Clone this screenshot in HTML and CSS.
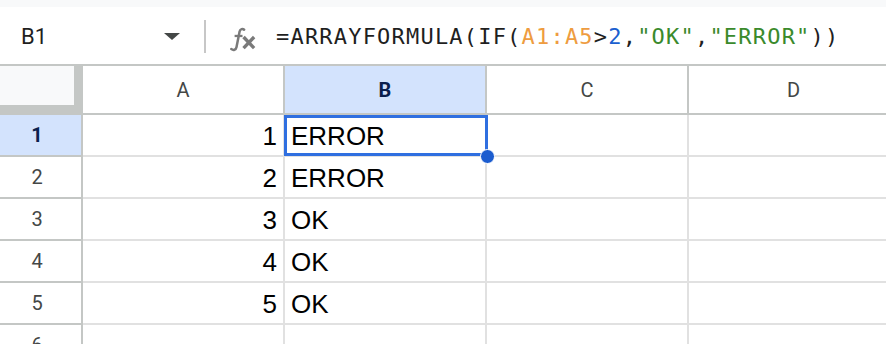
FILE: index.html
```html
<!DOCTYPE html>
<html>
<head>
	<title>Sheet</title>
	<meta charset="utf-8">
	<link rel="stylesheet" href="styles.css">
</head>
<body>
	<div class="topStrip"></div>
	<div class="formulaBar">
		<div class="nameBox">
			<span class="cellRef">B1</span>
			<span class="dropArrow"></span>
		</div>
		<div class="divider"></div>
		<svg class="fxIcon" viewBox="0 0 26 24" version="1.1" xmlns="http://www.w3.org/2000/svg">
			<path d="M14.6 2.6 C13.2 1.3 10.8 1.6 10.2 4.4 L7.2 19.4 C6.6 22.2 4.2 22.6 2.2 21.2" fill="none" stroke="#7a7a7a" stroke-width="2.4" stroke-linecap="round"/>
			<line x1="5.4" y1="8.6" x2="13" y2="8.6" stroke="#7a7a7a" stroke-width="2.2"/>
			<line x1="14" y1="9.6" x2="24.2" y2="20.4" stroke="#7a7a7a" stroke-width="3.2"/>
			<line x1="24.2" y1="9.6" x2="14" y2="20.4" stroke="#7a7a7a" stroke-width="3.2"/>
		</svg>
		<div class="formula">=ARRAYFORMULA(IF(<span class="range">A1:A5</span>&gt;<span class="num">2</span>,<span class="str">"OK"</span>,<span class="str">"ERROR"</span>))</div>
	</div>

	<div class="sheet">
		<div class="row headRow">
			<div class="corner"></div>
			<div class="colHead">A</div>
			<div class="colHead active">B</div>
			<div class="colHead">C</div>
			<div class="colHead">D</div>
		</div>
		<div class="row">
			<div class="rowHead active">1</div>
			<div class="cell num">1</div>
			<div class="cell selected">ERROR<span class="handle"></span></div>
			<div class="cell"></div>
			<div class="cell"></div>
		</div>
		<div class="row">
			<div class="rowHead">2</div>
			<div class="cell num">2</div>
			<div class="cell">ERROR</div>
			<div class="cell"></div>
			<div class="cell"></div>
		</div>
		<div class="row">
			<div class="rowHead">3</div>
			<div class="cell num">3</div>
			<div class="cell">OK</div>
			<div class="cell"></div>
			<div class="cell"></div>
		</div>
		<div class="row">
			<div class="rowHead">4</div>
			<div class="cell num">4</div>
			<div class="cell">OK</div>
			<div class="cell"></div>
			<div class="cell"></div>
		</div>
		<div class="row">
			<div class="rowHead">5</div>
			<div class="cell num">5</div>
			<div class="cell">OK</div>
			<div class="cell"></div>
			<div class="cell"></div>
		</div>
		<div class="row">
			<div class="rowHead">6</div>
			<div class="cell num"></div>
			<div class="cell"></div>
			<div class="cell"></div>
			<div class="cell"></div>
		</div>
	</div>
</body>
</html>
```

FILE: styles.css
```css
body {
	margin: 0;
	padding: 0;
	overflow: hidden;
	background: #fff;
	font-family: Roboto, "Liberation Sans", sans-serif;
}

.topStrip {
	height: 7px;
	background: #f8f9fa;
}

/* formula bar */
.formulaBar {
	display: flex;
	align-items: center;
	height: 57px;
	background: #fff;
}

.nameBox {
	display: flex;
	align-items: center;
	justify-content: space-between;
	box-sizing: border-box;
	width: 204px;
	padding: 0 24px 0 21px;
}

.cellRef {
	font-size: 22px;
	color: #1f1f1f;
	margin-top: 1px;
}

.dropArrow {
	width: 0;
	height: 0;
	border-left: 8px solid transparent;
	border-right: 8px solid transparent;
	border-top: 7px solid #444746;
	margin-top: 2px;
}

.divider {
	width: 2px;
	height: 33px;
	margin-top: 2px;
	background: #c7c7c7;
}

.fxIcon {
	width: 27px;
	height: 25px;
	margin: 8px 0 0 23px;
}

.formula {
	margin-left: 20px;
	font-family: "DejaVu Sans Mono", "Liberation Mono", monospace;
	font-size: 22px;
	letter-spacing: 1.2px;
	color: #1f1f1f;
	white-space: nowrap;
	margin-top: 1px;
}

.formula .range {
	color: #ee9c40;
}

.formula .num {
	color: #1b5fcf;
}

.formula .str {
	color: #3a8a2c;
}

/* grid */
.sheet {
	width: 900px;
}

.row {
	display: grid;
	grid-template-columns: 83px 202px 202px 202px 211px;
	height: 42px;
}

.row > div {
	box-sizing: border-box;
	border-right: 2px solid #e1e1e1;
	border-bottom: 2px solid #e1e1e1;
}

.headRow {
	height: 49px;
	border-top: 2px solid #c4c7c5;
}

.row > .corner {
	background: #f8f9fa;
	border-right: 9px solid #c4c7c5;
	border-bottom: 10px solid #c4c7c5;
}

.row > .colHead {
	display: flex;
	align-items: center;
	justify-content: center;
	font-size: 20px;
	color: #444746;
	border-right-color: #c4c7c5;
	border-bottom-color: #c4c7c5;
}

.row > .rowHead {
	display: flex;
	align-items: center;
	justify-content: center;
	padding-right: 7px;
	font-size: 20px;
	color: #444746;
	border-right-color: #c4c7c5;
	border-bottom-color: #c4c7c5;
}

.row > .active {
	background: #d3e3fd;
	color: #0b1f4d;
	font-weight: bold;
}

.cell {
	position: relative;
	display: flex;
	align-items: flex-end;
	padding: 0 6px 4px 6px;
	font-family: "Liberation Sans", Arial, sans-serif;
	font-size: 26px;
	line-height: 30px;
	color: #000;
}

.cell.num {
	justify-content: flex-end;
}

.selected::after {
	content: "";
	position: absolute;
	left: -1px;
	top: 0;
	width: 204px;
	height: 41px;
	box-sizing: border-box;
	border: 3px solid #2f6fe0;
}

.handle {
	position: absolute;
	left: 195px;
	top: 34px;
	width: 15px;
	height: 15px;
	border-radius: 50%;
	background: #1b5ccf;
	border: 1px solid #fff;
	box-sizing: border-box;
	z-index: 2;
}
```
